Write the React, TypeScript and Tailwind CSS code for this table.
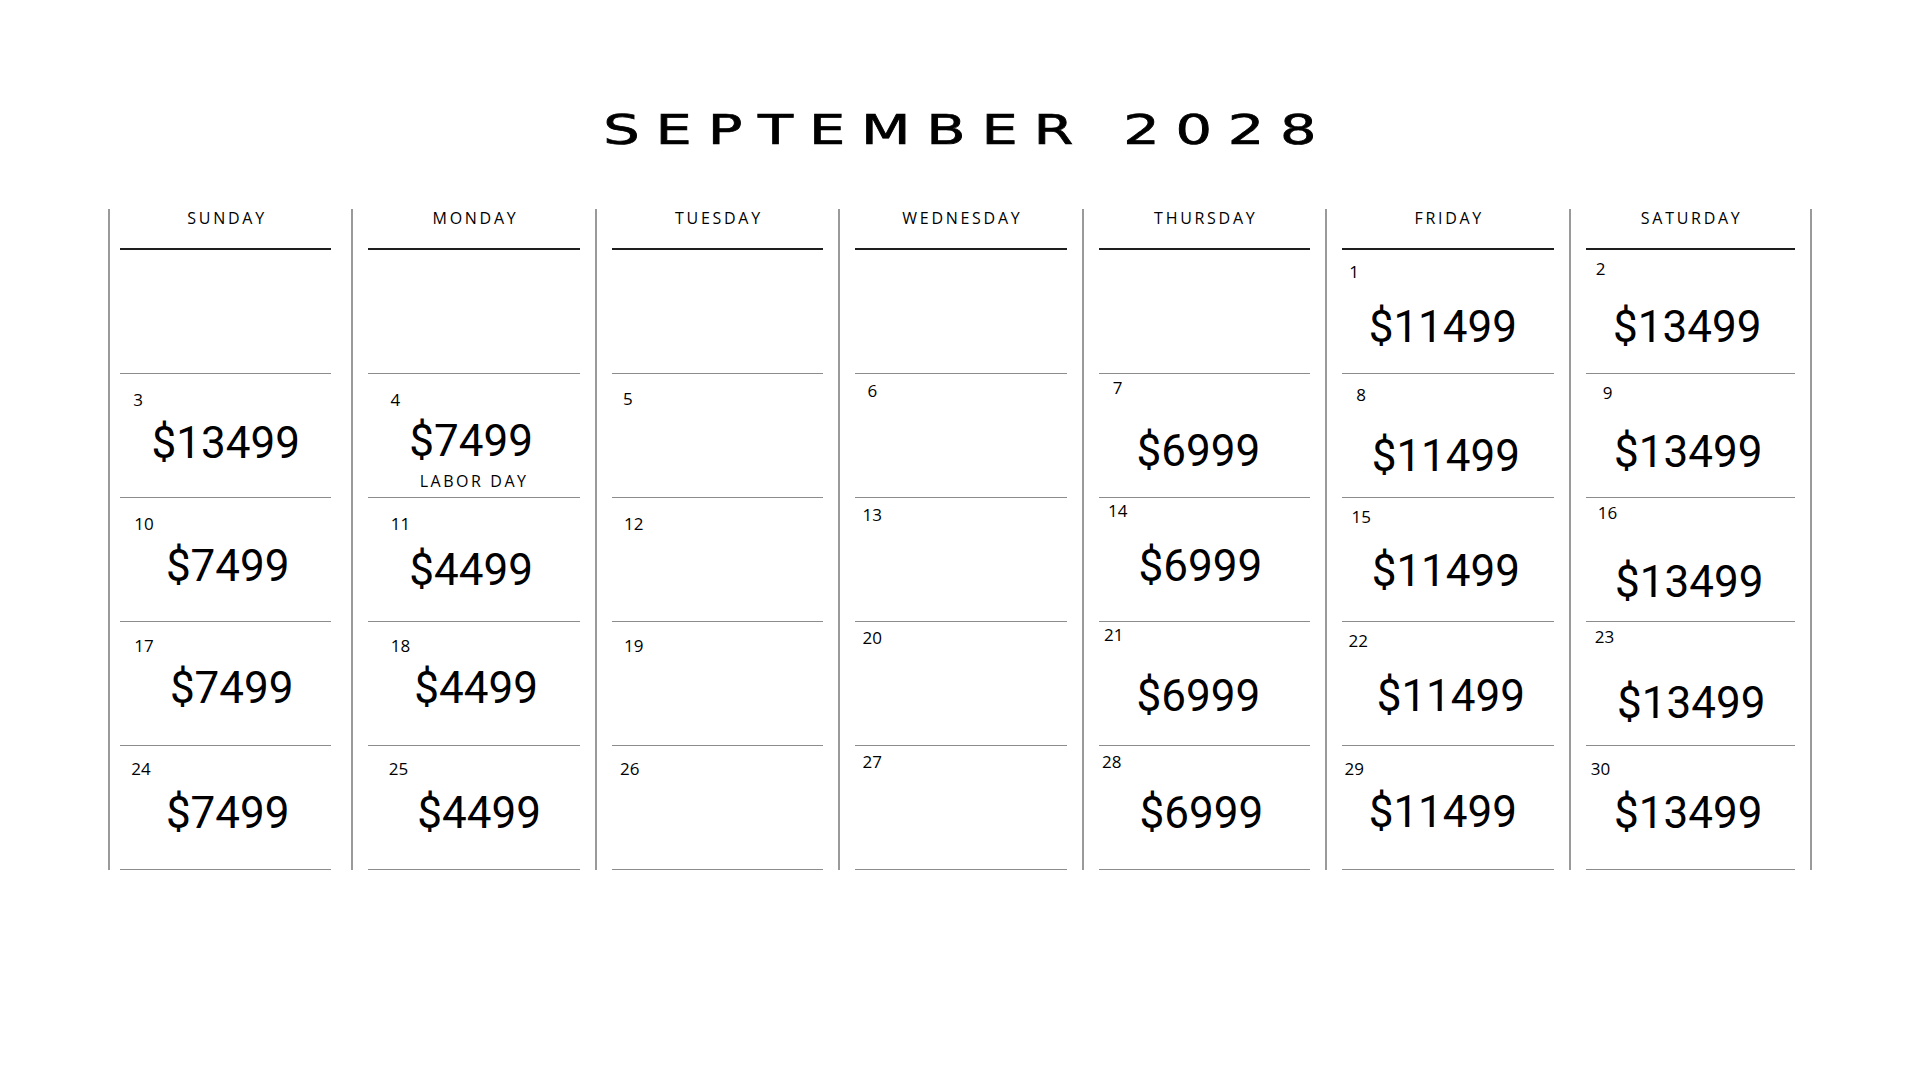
import React from 'react';

type Cell = {
  day?: number;
  d?: [number, number]; // date centre offset from cell content-left / row top
  price?: string;
  p?: [number, number]; // price centre offset from cell centre / row top
  note?: string;
};

const days = ['SUNDAY', 'MONDAY', 'TUESDAY', 'WEDNESDAY', 'THURSDAY', 'FRIDAY', 'SATURDAY'];

const weeks: Cell[][] = [
  [
    {}, {}, {}, {}, {},
    { day: 1, d: [12, 22], price: '$11499', p: [-5, 77] },
    { day: 2, d: [15, 19], price: '$13499', p: [-3, 77] },
  ],
  [
    { day: 3, d: [18, 26], price: '$13499', p: [0, 69] },
    { day: 4, d: [27, 26], price: '$7499', p: [-3, 67], note: 'LABOR DAY' },
    { day: 5, d: [16, 25] },
    { day: 6, d: [17, 17] },
    { day: 7, d: [19, 14], price: '$6999', p: [-6, 77] },
    { day: 8, d: [19, 21], price: '$11499', p: [-2, 82] },
    { day: 9, d: [22, 19], price: '$13499', p: [-2, 78] },
  ],
  [
    { day: 10, d: [24, 26], price: '$7499', p: [2, 68] },
    { day: 11, d: [32, 26], price: '$4499', p: [-3, 72] },
    { day: 12, d: [22, 26] },
    { day: 13, d: [17, 17] },
    { day: 14, d: [19, 13], price: '$6999', p: [-4, 68] },
    { day: 15, d: [19, 19], price: '$11499', p: [-2, 73] },
    { day: 16, d: [22, 15], price: '$13499', p: [-1, 84] },
  ],
  [
    { day: 17, d: [24, 24], price: '$7499', p: [6, 66] },
    { day: 18, d: [32, 24], price: '$4499', p: [2, 66] },
    { day: 19, d: [22, 24] },
    { day: 20, d: [17, 16] },
    { day: 21, d: [15, 13], price: '$6999', p: [-6, 74] },
    { day: 22, d: [16, 19], price: '$11499', p: [3, 74] },
    { day: 23, d: [19, 15], price: '$13499', p: [1, 81] },
  ],
  [
    { day: 24, d: [21, 23], price: '$7499', p: [2, 67] },
    { day: 25, d: [30, 23], price: '$4499', p: [5, 67] },
    { day: 26, d: [18, 23] },
    { day: 27, d: [17, 16] },
    { day: 28, d: [13, 16], price: '$6999', p: [-3, 67] },
    { day: 29, d: [12, 23], price: '$11499', p: [-5, 66] },
    { day: 30, d: [15, 23], price: '$13499', p: [-2, 67] },
  ],
];

const DayCell = ({ cell }: { cell: Cell }) => {
  const [dx, dy] = cell.d ?? [0, 0];
  const [px, py] = cell.p ?? [0, 0];
  return (
    <div className="h-[124px] border-b border-[#8c8c8c] flex flex-col">
      {cell.day !== undefined && (
        <div
          className="w-[40px] h-[20px] leading-[20px] text-center text-[17px] font-medium text-black font-['Open_Sans',sans-serif]"
          style={{ marginLeft: dx - 20, marginTop: dy - 10 }}
        >
          {cell.day}
        </div>
      )}
      {cell.price && (
        <div
          className="h-[50px] leading-[50px] text-center text-[44px] text-black font-['Roboto',sans-serif]"
          style={{
            marginTop: py - 25 - (dy + 10),
            paddingLeft: px > 0 ? px * 2 : 0,
            paddingRight: px < 0 ? -px * 2 : 0,
          }}
        >
          {cell.price}
        </div>
      )}
      {cell.note && (
        <div className="mt-[5px] h-[20px] leading-[20px] text-center text-[16px] font-medium tracking-[0.16em] text-black font-['Open_Sans',sans-serif]">
          {cell.note}
        </div>
      )}
    </div>
  );
};

export default function App() {
  return (
    <div className="w-full min-h-screen bg-white">
      <div className="pt-[105px] h-[209px] flex justify-center">
        <h1 className="h-[50px] scale-x-140 text-[41px] leading-[50px] tracking-[0.275em] pl-[0.275em] whitespace-nowrap text-black [-webkit-text-stroke:0.7px_black] font-['DejaVu_Sans',sans-serif]">
          SEPTEMBER 2028
        </h1>
      </div>
      <div className="mx-auto w-[1704px] grid grid-cols-7">
        {days.map((name, i) => (
          <div
            key={name}
            className={`border-l-2 border-[#9a9a9a] ${i === 0 ? 'pl-[10px] pr-[20px]' : 'px-[15px]'} ${i === 6 ? 'border-r-2' : ''}`}
          >
            <div className="h-[41px] border-b-2 border-[#1e1e1e] text-center text-[16px] leading-[18px] font-medium tracking-[0.17em] pl-[0.17em] text-black font-['Open_Sans',sans-serif]">
              {name}
            </div>
            {weeks.map((w, r) => (
              <DayCell key={r} cell={w[i]} />
            ))}
          </div>
        ))}
      </div>
    </div>
  );
}
